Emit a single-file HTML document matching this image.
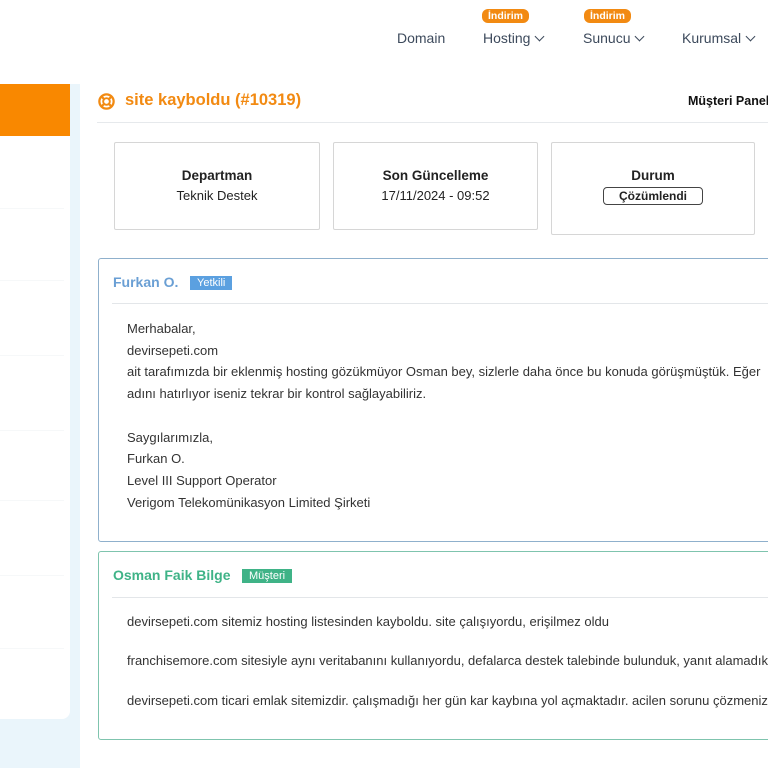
<!DOCTYPE html>
<html><head><meta charset="utf-8"><style>
*{margin:0;padding:0;box-sizing:border-box}
body{width:768px;height:768px;overflow:hidden;background:#fff;font-family:"Liberation Sans",sans-serif;position:relative;color:#333}
.a{position:absolute;white-space:nowrap}
.nav{font-size:14px;color:#3d4a5c;top:30px}
.badge{position:absolute;background:#f28a12;color:#fff;font-size:10.5px;font-weight:bold;border-radius:6px;padding:1px 6px;top:9px}
.chev{display:inline-block;width:7px;height:7px;border-right:1.3px solid #3d4a5c;border-bottom:1.3px solid #3d4a5c;transform:rotate(45deg);margin-left:6px;position:relative;top:-3px}
.box{position:absolute;border:1px solid #d6d6d6;border-radius:2px;text-align:center;font-size:13px;color:#222;background:#fff}
.box b{display:block;margin-top:25px;margin-bottom:5px;font-size:13.5px}
.card{position:absolute;left:98px;width:690px;border-radius:3px;background:#fff}
.body{font-size:13px;line-height:21.7px;color:#333;position:absolute;left:127px;white-space:nowrap}
</style></head><body>
<div class="a" style="left:0;top:84px;width:80px;height:684px;background:#eaf5fb"></div>
<div class="a" style="left:0;top:84px;width:70px;height:635px;background:#fff;border-radius:0 0 8px 0"></div>
<div class="a" style="left:0;top:84px;width:70px;height:52px;background:#f98800"></div>
<div class="a" style="left:0;top:208px;width:64px;border-top:1px solid #f6f8f9"></div>
<div class="a" style="left:0;top:280px;width:64px;border-top:1px solid #f6f8f9"></div>
<div class="a" style="left:0;top:355px;width:64px;border-top:1px solid #f6f8f9"></div>
<div class="a" style="left:0;top:430px;width:64px;border-top:1px solid #f6f8f9"></div>
<div class="a" style="left:0;top:500px;width:64px;border-top:1px solid #f6f8f9"></div>
<div class="a" style="left:0;top:575px;width:64px;border-top:1px solid #f6f8f9"></div>
<div class="a" style="left:0;top:648px;width:64px;border-top:1px solid #f6f8f9"></div>

<div class="a nav" style="left:397px">Domain</div>
<div class="badge" style="left:482px">İndirim</div>
<div class="a nav" style="left:483px">Hosting<span class="chev"></span></div>
<div class="badge" style="left:584px">İndirim</div>
<div class="a nav" style="left:583px">Sunucu<span class="chev"></span></div>
<div class="a nav" style="left:682px">Kurumsal<span class="chev"></span></div>

<svg class="a" style="left:97px;top:92px" width="19" height="19" viewBox="0 0 20 20"><circle cx="10" cy="10" r="7.5" fill="none" stroke="#f28a12" stroke-width="2.4"/><circle cx="10" cy="10" r="3.5" fill="none" stroke="#f28a12" stroke-width="2"/><path d="M4.5 4.5L7.5 7.5M15.5 4.5L12.5 7.5M4.5 15.5L7.5 12.5M15.5 15.5L12.5 12.5" stroke="#f28a12" stroke-width="2.4"/></svg>
<div class="a" style="left:125px;top:91px;font-size:16.5px;font-weight:bold;color:#f28a12">site kayboldu (#10319)</div>
<div class="a" style="left:688px;top:94px;font-size:12.5px;font-weight:bold;color:#111">Müşteri Paneli</div>
<div class="a" style="left:97px;top:122px;width:680px;border-top:1px solid #e6e9ec"></div>

<div class="box" style="left:114px;top:142px;width:206px;height:88px"><b>Departman</b>Teknik Destek</div>
<div class="box" style="left:333px;top:142px;width:205px;height:88px"><b>Son Güncelleme</b>17/11/2024 - 09:52</div>
<div class="box" style="left:551px;top:142px;width:204px;height:93px"><b>Durum</b><span style="display:inline-block;border:1px solid #444;border-radius:4px;font-size:12px;font-weight:bold;padding:1px 15px;margin-top:-1px">Çözümlendi</span></div>

<div class="card" style="top:258px;height:284px;border:1px solid #8fb0cc"></div>
<div class="a" style="left:113px;top:274px;font-size:14px;font-weight:bold;color:#6a9fd4">Furkan O.</div>
<div class="a" style="left:190px;top:276px;background:#5ba0e0;color:#fff;font-size:11px;padding:1px 7px">Yetkili</div>
<div class="a" style="left:112px;top:303px;width:660px;border-top:1px solid #e3e6e9"></div>
<div class="body" style="top:318px">Merhabalar,<br>devirsepeti.com<br>ait tarafımızda bir eklenmiş hosting gözükmüyor Osman bey, sizlerle daha önce bu konuda görüşmüştük. Eğer<br>adını hatırlıyor iseniz tekrar bir kontrol sağlayabiliriz.<br><br>Saygılarımızla,<br>Furkan O.<br>Level III Support Operator<br>Verigom Telekomünikasyon Limited Şirketi</div>

<div class="card" style="top:551px;height:189px;border:1px solid #7fc4ae"></div>
<div class="a" style="left:113px;top:567px;font-size:14px;font-weight:bold;color:#3fb387">Osman Faik Bilge</div>
<div class="a" style="left:242px;top:569px;background:#3fb387;color:#fff;font-size:11px;padding:1px 7px">Müşteri</div>
<div class="a" style="left:112px;top:597px;width:660px;border-top:1px solid #e3e6e9"></div>
<div class="body" style="top:611px">devirsepeti.com sitemiz hosting listesinden kayboldu. site çalışıyordu, erişilmez oldu</div>
<div class="body" style="top:650px">franchisemore.com sitesiyle aynı veritabanını kullanıyordu, defalarca destek talebinde bulunduk, yanıt alamadık</div>
<div class="body" style="top:690px">devirsepeti.com ticari emlak sitemizdir. çalışmadığı her gün kar kaybına yol açmaktadır. acilen sorunu çözmenizi</div>
</body></html>
